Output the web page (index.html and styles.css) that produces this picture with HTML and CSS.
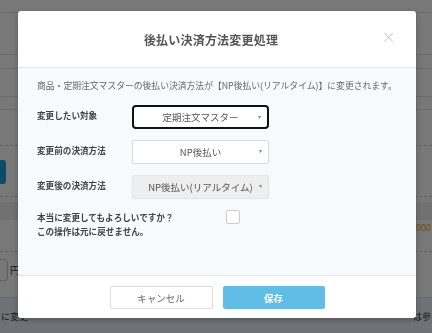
FILE: index.html
```html
<!DOCTYPE html>
<html lang="ja">
<head>
  <meta charset="UTF-8">
  <title>後払い決済方法変更処理</title>
  <link rel="stylesheet" href="styles.css">
</head>
<body>
  <div class="page">
    <div class="pg-row h13"></div>
    <div class="pg-row h42"></div>
    <div class="pg-row h14"></div>
    <div class="pg-row h28"></div>
    <div class="pg-row h13"></div>
    <div class="pg-row h36 dashed"></div>
    <div class="pg-row h51 dashed">
      <span class="pg-btn"></span>
    </div>
    <div class="pg-row h50 dashed">
      <div class="pg-band"></div>
      <span class="pg-num">000</span>
    </div>
    <div class="pg-row h46">
      <span class="pg-input"></span>
      <span class="pg-yen">円</span>
    </div>
    <div class="pg-note">
      <span>に変更</span>
      <span>は参</span>
    </div>
  </div>

  <div class="overlay">
    <div class="modal">
      <div class="modal-header">
        <div class="modal-title">後払い決済方法変更処理</div>
        <button class="modal-close" type="button" aria-label="閉じる">&times;</button>
      </div>
      <div class="modal-body">
        <p class="modal-desc">商品・定期注文マスターの後払い決済方法が【NP後払い(リアルタイム)】に変更されます。</p>
        <div class="form-row">
          <div class="form-label">変更したい対象</div>
          <div class="select focused">
            <span>定期注文マスター</span>
            <span class="caret">&#9662;</span>
          </div>
        </div>
        <div class="form-row">
          <div class="form-label">変更前の決済方法</div>
          <div class="select">
            <span>NP後払い</span>
            <span class="caret">&#9662;</span>
          </div>
        </div>
        <div class="form-row">
          <div class="form-label">変更後の決済方法</div>
          <div class="select disabled">
            <span>NP後払い(リアルタイム)</span>
            <span class="caret">&#9662;</span>
          </div>
        </div>
        <div class="form-row confirm">
          <div class="form-label">本当に変更してもよろしいですか？<br>この操作は元に戻せません。</div>
          <span class="checkbox"></span>
        </div>
      </div>
      <div class="modal-footer">
        <button class="btn btn-cancel" type="button">キャンセル</button>
        <button class="btn btn-save" type="button">保存</button>
      </div>
    </div>
  </div>
</body>
</html>
```

FILE: styles.css
```css
:root {
  --main-font: 'Noto Sans CJK JP', 'Noto Sans', sans-serif;
  --text: #555;
  --border: #ddd;
  --body-bg: #f8f9fb;
}
html, body {
  margin: 0;
  padding: 0;
  height: 100%;
  overflow: hidden;
  background: #fff;
  font-family: var(--main-font);
}
.page {
  position: relative;
  width: 100%;
}
.pg-row {
  position: relative;
  box-sizing: border-box;
  border-bottom: 1px solid #e2e2e2;
}
.pg-row.dashed {
  border-bottom: 1px dashed #ccc;
}
.h13 { height: 13px; }
.h14 { height: 14px; }
.h28 { height: 28px; }
.h36 { height: 36px; }
.h42 { height: 42px; }
.h46 { height: 46px; }
.h50 { height: 50px; }
.h51 { height: 51px; }
.pg-btn {
  position: absolute;
  left: -4px;
  top: 14px;
  width: 10px;
  height: 24px;
  border-radius: 3px;
  background: #1f9ed6;
}
.pg-band {
  margin-top: 5px;
  height: 18px;
  background: #f0f0f0;
}
.pg-num {
  position: absolute;
  right: 1px;
  top: 19px;
  font-size: 9px;
  color: #f0a020;
}
.pg-input {
  position: absolute;
  left: -6px;
  top: 7px;
  width: 12px;
  height: 20px;
  border: 1px solid #ccc;
  border-radius: 3px;
}
.pg-yen {
  position: absolute;
  left: 10px;
  top: 10px;
  font-size: 10px;
  color: #333;
}
.pg-note {
  display: flex;
  justify-content: space-between;
  height: 40px;
  padding: 12px 1px 0 1px;
  box-sizing: border-box;
  background: #e9f3fa;
  font-size: 9px;
  color: #333;
}

.overlay {
  position: fixed;
  inset: 0;
  background: rgba(0, 0, 0, 0.53);
  padding: 11px 0 0 18px;
}
.modal {
  width: 398px;
  background: #fff;
  border-radius: 3px;
  box-shadow: 0 2px 6px rgba(0, 0, 0, 0.25);
  overflow: hidden;
  color: var(--text);
}
.modal-header {
  position: relative;
  height: 57px;
  display: flex;
  align-items: center;
  justify-content: center;
  border-bottom: 1px solid #e4e4e4;
  box-sizing: border-box;
}
.modal-title {
  font-size: 12px;
  font-weight: 700;
  color: #555;
  margin-right: 12px;
  letter-spacing: 0.2px;
}
.modal-close {
  position: absolute;
  right: 20px;
  top: 16px;
  background: none;
  border: none;
  padding: 0;
  font-size: 18px;
  line-height: 20px;
  color: #ccc;
  font-family: 'DejaVu Sans', sans-serif;
  font-weight: 300;
}
.modal-body {
  background: var(--body-bg);
  height: 207px;
  box-sizing: border-box;
  padding: 12px 19px 0 19px;
}
.modal-desc {
  margin: 0 0 13px 0;
  font-size: 8.8px;
  line-height: 12px;
  color: #666;
  white-space: nowrap;
}
.form-row {
  display: flex;
  align-items: flex-start;
  margin-bottom: 11px;
}
.form-label {
  width: 95px;
  flex-shrink: 0;
  font-size: 8.6px;
  font-weight: 700;
  line-height: 14px;
  color: #444;
  padding-top: 3px;
}
.select {
  width: 137px;
  height: 24px;
  box-sizing: border-box;
  border: 1px solid var(--border);
  border-radius: 2px;
  background: #fff;
  display: flex;
  align-items: center;
  justify-content: center;
  position: relative;
  font-size: 9.5px;
  color: #555;
}
.select.focused {
  border: 2px solid #111;
  border-radius: 4px;
}
.select.disabled {
  background: #eee;
  border-color: #e4e4e4;
}
.caret {
  position: absolute;
  right: 6px;
  top: 6px;
  font-size: 6px;
  color: #888;
  font-family: 'DejaVu Sans', sans-serif;
}
.confirm {
  margin-top: 3px;
}
.confirm .form-label {
  width: auto;
  padding-top: 0;
}
.checkbox {
  width: 14px;
  height: 14px;
  box-sizing: border-box;
  border: 1px solid #ccc;
  border-radius: 2px;
  background: #fff;
  margin: 0 0 0 52px;
}
.modal-footer {
  height: 43px;
  border-top: 1px solid #e4e4e4;
  box-sizing: border-box;
  display: flex;
  justify-content: center;
  align-items: flex-start;
  gap: 10px;
  padding-top: 10px;
}
.btn {
  width: 103px;
  height: 23px;
  box-sizing: border-box;
  border-radius: 2px;
  font-family: var(--main-font);
  font-size: 9.5px;
  cursor: pointer;
}
.btn-cancel {
  background: #fff;
  border: 1px solid #ddd;
  color: #666;
}
.btn-save {
  width: 102px;
  background: #62bde6;
  border: none;
  color: #fff;
  font-weight: 700;
}
```
